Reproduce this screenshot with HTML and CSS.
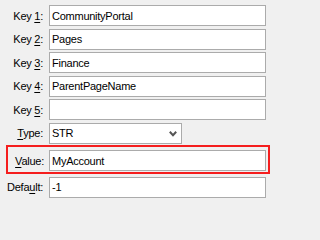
FILE: index.html
```html
<!DOCTYPE html>
<html>
<head>
<meta charset="utf-8">
<link rel="stylesheet" href="styles.css">
</head>
<body>
<div class="form">
  <label class="lbl"><span>Key <u>1</u>:</span></label>
  <div class="field">CommunityPortal</div>
  <label class="lbl"><span>Key <u>2</u>:</span></label>
  <div class="field">Pages</div>
  <label class="lbl"><span>Key <u>3</u>:</span></label>
  <div class="field">Finance</div>
  <label class="lbl"><span>Key <u>4</u>:</span></label>
  <div class="field">ParentPageName</div>
  <label class="lbl"><span>Key <u>5</u>:</span></label>
  <div class="field"></div>
  <label class="lbl"><span><u>T</u>ype:</span></label>
  <div class="select">
    <span>STR</span>
    <svg class="chev" width="8" height="6" viewBox="0 0 8 6"><polyline points="0.8,0.8 4,4.2 7.2,0.8" fill="none" stroke="#555" stroke-width="2"/></svg>
  </div>
  <div class="hl">
    <label class="lbl"><span><u>V</u>alue:</span></label>
    <div class="field">MyAccount</div>
  </div>
  <label class="lbl"><span>Defa<u>u</u>lt:</span></label>
  <div class="field">-1</div>
</div>
</body>
</html>
```
FILE: styles.css
```css
html, body {
  margin: 0;
  padding: 0;
  background: #f0f0f0;
}
body {
  font-family: "Liberation Sans", Arial, sans-serif;
  font-size: 11px;
  letter-spacing: -0.25px;
  color: #000;
}
.form {
  display: grid;
  grid-template-columns: 49px 217px;
  row-gap: 2.5px;
  padding-top: 5px;
}
.lbl {
  height: 21px;
  display: flex;
  align-items: center;
  justify-content: flex-end;
  padding-right: 6px;
  white-space: nowrap;
}
.lbl u {
  text-decoration-thickness: 1px;
  text-underline-offset: 2px;
}
.field {
  box-sizing: border-box;
  height: 21px;
  border: 1px solid #ababab;
  background: #fff;
  padding: 0 2px;
  display: flex;
  align-items: center;
  white-space: nowrap;
}
.select {
  box-sizing: border-box;
  width: 133px;
  height: 21px;
  border: 1px solid #ababab;
  background: #fff;
  padding: 0 4px 0 2px;
  display: flex;
  align-items: center;
  justify-content: space-between;
}
.chev {
  margin-top: 1px;
}
.hl {
  grid-column: 1 / -1;
  display: grid;
  grid-template-columns: 41px 217px;
  margin: -1px -4px 0 6px;
  padding: 3px 2px 1px 0;
  border: 2px solid #f51e1e;
}
.hl .lbl {
  padding-right: 5px;
}
```
